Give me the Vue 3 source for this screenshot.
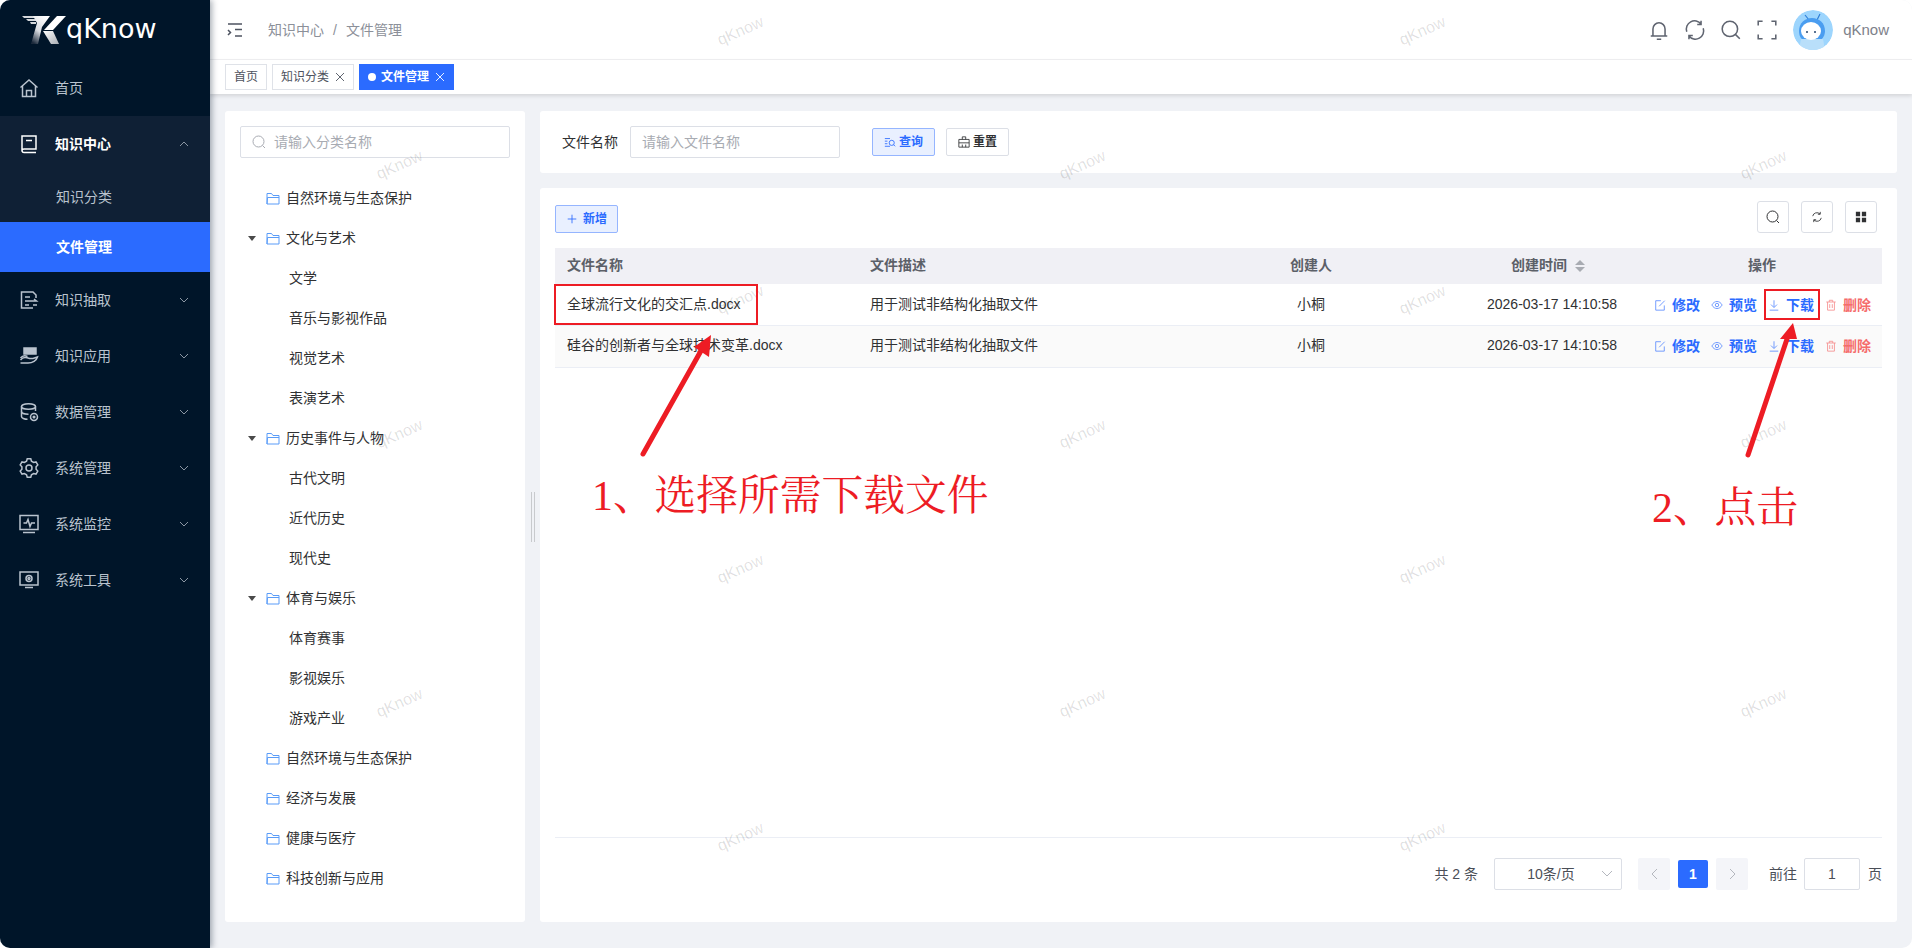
<template>
  <div class="page">
    <aside class="sidebar">
      <div class="logo">
        <svg class="logo-mark" viewBox="0 0 44 28">
          <defs>
            <linearGradient id="wing" x1="0.7" y1="0" x2="0.2" y2="1">
              <stop offset="0" stop-color="#fff" />
              <stop offset="0.55" stop-color="#d8dbe0" />
              <stop offset="1" stop-color="#1c2a3c" />
            </linearGradient>
            <linearGradient id="leg" x1="0" y1="0" x2="1" y2="1">
              <stop offset="0" stop-color="#fff" />
              <stop offset="1" stop-color="#a9adb3" />
            </linearGradient>
          </defs>
          <path d="M0 0h13l1.5 2H2zM4 3h10v2H6zM8 6h6v2H9z" fill="#d5d8dc" />
          <path d="M11 0h17l-8 11-4 17H9l6-21z" fill="url(#wing)" />
          <path d="M35 0h9L31 14h-9z" fill="#fff" />
          <path d="M21 15h10l6 13h-8z" fill="url(#leg)" />
        </svg>
        <span class="logo-text">qKnow</span>
      </div>
      <nav>
        <template v-for="item in menu" :key="item.label">
          <div class="menu-item" :class="{ open: item.children }">
            <svg class="menu-icon" viewBox="0 0 20 20">
              <path v-for="d in icons[item.icon]" :key="d" :d="d" />
              <path v-if="item.icon === 'hand'" class="filled" d="M5 2h12v6H5z" />
            </svg>
            <span>{{ item.label }}</span>
            <svg v-if="item.arrow" class="menu-arrow" viewBox="0 0 10 6">
              <path :d="item.children ? 'M1 5l4-4 4 4' : 'M1 1l4 4 4-4'" />
            </svg>
          </div>
          <div
            v-for="sub in item.children"
            :key="sub.label"
            class="sub-item"
            :class="{ active: sub.active }"
          >
            {{ sub.label }}
          </div>
        </template>
      </nav>
    </aside>

    <div class="main">
      <header class="topbar">
        <svg class="collapse" viewBox="0 0 16 14">
          <path d="M1 1h14M8 6.5h7M8 13h7M1 7l2.5 2.5L1 12" />
        </svg>
        <span class="crumb">知识中心</span>
        <span class="crumb-sep">/</span>
        <span class="crumb">文件管理</span>
        <div class="top-actions">
          <svg viewBox="0 0 20 20"><path d="M2.5 15.5h15M4.5 15.5V9a5.5 5.5 0 0 1 11 0v6.5M8 18.5h4" /></svg>
          <svg viewBox="0 0 20 20"><path d="M2.5 11.5A7.5 7.5 0 0 1 15.500 4.500M17.500 8.500A7.500 7.500 0 0 1 4.500 15.500M15.500 1.500v3.500H12M4.500 18.500V15H8" /></svg>
          <svg viewBox="0 0 20 20"><path d="M9 2a7 7 0 1 0 0 14 7 7 0 0 0 0-14zM14.2 14.2L18 18" /></svg>
          <svg viewBox="0 0 20 20"><path d="M2 6V2h4M14 2h4v4M18 14v4h-4M6 18H2v-4" /></svg>
          <svg class="avatar" viewBox="0 0 40 40">
            <circle cx="20" cy="20" r="20" fill="#9dd5fd" />
            <path d="M12 5l4 5M27 4l-3 6" stroke="#2f7fd8" stroke-width="1.2" fill="none" />
            <path d="M6 21c0-8 6-13 13-13s13 5 13 13c0 6-4 9-6 10H12c-3-1-6-4-6-10z" fill="#4a9df0" />
            <path d="M8 29h22l2 11H6z" fill="#b9dffa" />
            <ellipse cx="18" cy="21" rx="10" ry="9" fill="#fff" />
            <circle cx="14" cy="22" r="1" fill="#23436e" />
            <circle cx="22" cy="22" r="1" fill="#23436e" />
          </svg>
          <span class="user">qKnow</span>
        </div>
      </header>

      <div class="tags">
        <span class="tag">首页</span>
        <span class="tag">知识分类<svg class="tag-x" viewBox="0 0 10 10"><path d="M1 1l8 8M9 1l-8 8" /></svg></span>
        <span class="tag active"><b class="dot"></b>文件管理<svg class="tag-x" viewBox="0 0 10 10"><path d="M1 1l8 8M9 1l-8 8" /></svg></span>
      </div>

      <div class="content">
        <section class="tree-panel">
          <div class="input search-input">
            <svg viewBox="0 0 14 14"><path d="M6.5 1a5.5 5.5 0 1 0 0 11 5.5 5.5 0 0 0 0-11zM10.5 10.5L13 13" /></svg>
            <span>请输入分类名称</span>
          </div>
          <div class="tree">
            <div v-for="node in tree" :key="node.key" class="tree-row" :class="{ leaf: !node.folder }">
              <template v-if="node.folder">
                <i class="caret" :class="{ hidden: !node.open }"></i>
                <svg class="folder" viewBox="0 0 14 13">
                  <path d="M1 12V1.5h4.5L7 3.5h6V12zM1 12l.5-6.5H13" />
                </svg>
              </template>
              <span>{{ node.label }}</span>
            </div>
          </div>
        </section>

        <div class="splitter"><i></i></div>

        <div class="right">
          <section class="query card">
            <label>文件名称</label>
            <div class="input name-input"><span>请输入文件名称</span></div>
            <button class="btn primary first-btn">
              <svg viewBox="0 0 14 14"><path d="M1 3h6M1 6h3M1 9h3M1 12h6M9 5a3 3 0 1 0 0 6 3 3 0 0 0 0-6zM11.2 10.2L13 12" /></svg>
              查询
            </button>
            <button class="btn">
              <svg viewBox="0 0 14 14"><path d="M5 4V1h4v3M1 4h12v9H1zM1 8h12M5 13v-3M9 13v-3" /></svg>
              重置
            </button>
          </section>

          <section class="table-card card">
            <div class="toolbar">
              <button class="btn primary add-btn">
                <svg viewBox="0 0 14 14"><path d="M7 2v10M2 7h10" /></svg>
                新增
              </button>
              <div class="tools">
                <button class="tool">
                  <svg viewBox="0 0 14 14"><path d="M6.5 1a5.5 5.5 0 1 0 0 11 5.5 5.5 0 0 0 0-11zM10.5 10.5L13 13" /></svg>
                </button>
                <button class="tool">
                  <svg class="small" viewBox="0 0 14 14"><path d="M2 6a5 5 0 0 1 8.5-2.500M12 8a5 5 0 0 1-8.500 2.500M10.800 1v2.800H8M3.200 13v-2.800H6" /></svg>
                </button>
                <button class="tool">
                  <svg class="solid" viewBox="0 0 14 14"><path d="M1 1h5v5H1zM8 1h5v5H8zM1 8h5v5H1zM8 8h5v5H8z" /></svg>
                </button>
              </div>
            </div>

            <div class="table-wrap">
              <table>
                <colgroup>
                  <col style="width: 303px" />
                  <col style="width: 363px" />
                  <col style="width: 180px" />
                  <col style="width: 241px" />
                  <col style="width: 240px" />
                </colgroup>
                <thead>
                  <tr>
                    <th>文件名称</th>
                    <th>文件描述</th>
                    <th class="center">创建人</th>
                    <th class="center time head-time">
                      创建时间
                      <span class="sort"><i></i><i></i></span>
                    </th>
                    <th class="center">操作</th>
                  </tr>
                </thead>
                <tbody>
                  <tr v-for="row in rows" :key="row.name">
                    <td>{{ row.name }}</td>
                    <td>{{ row.desc }}</td>
                    <td class="center">{{ row.user }}</td>
                    <td class="center time">{{ row.time }}</td>
                    <td>
                      <div class="ops">
                        <a v-for="op in ops" :key="op.label" class="op" :class="{ danger: op.danger }">
                          <svg viewBox="0 0 14 14">
                            <path v-for="d in op.icon" :key="d" :d="d" />
                          </svg>
                          {{ op.label }}
                        </a>
                      </div>
                    </td>
                  </tr>
                </tbody>
              </table>
            </div>

            <div class="pager">
              <span class="total">共 2 条</span>
              <div class="page-size">
                <span>10条/页</span>
                <svg viewBox="0 0 12 7"><path d="M1 1l5 5 5-5" /></svg>
              </div>
              <button class="nav-btn">
                <svg viewBox="0 0 7 12"><path d="M6 1L1 6l5 5" /></svg>
              </button>
              <span class="num">1</span>
              <button class="nav-btn">
                <svg viewBox="0 0 7 12"><path d="M1 1l5 5-5 5" /></svg>
              </button>
              <span class="jump">前往</span>
              <div class="jump-input">1</div>
              <span>页</span>
            </div>
          </section>
        </div>
      </div>

      <span
        v-for="mark in watermarks"
        :key="mark.x + '-' + mark.y"
        class="watermark"
        :style="{ left: mark.x + 'px', top: mark.y + 'px' }"
      >qKnow</span>
    </div>

    <!-- red notes drawn over the screenshot -->
    <i class="note-box box-one"></i>
    <i class="note-box box-two"></i>
    <svg class="note-arrows" viewBox="0 0 1912 948">
      <path class="shaft" d="M643 454L702 349" />
      <path class="head" d="M711 335L694 347L709 357z" />
      <path class="shaft" d="M1748 455L1788 336" />
      <path class="head" d="M1793 323L1780 339L1797 339z" />
    </svg>
    <span class="note-text text-one">1、选择所需下载文件</span>
    <span class="note-text text-two">2、点击</span>
  </div>
</template>

<script setup>
// six teeth, flat tip on top
function gearPath() {
  const pt = (r, deg) => {
    const a = ((deg - 90) * Math.PI) / 180
    return (10 + r * Math.cos(a)).toFixed(2) + ' ' + (10 + r * Math.sin(a)).toFixed(2)
  }
  let d = ''
  for (let i = 0; i < 6; i++) {
    const c = i * 60
    d += (i ? 'L' : 'M') + pt(9.3, c - 11) + 'L' + pt(9.3, c + 11) + 'L' + pt(7.2, c + 20) + 'L' + pt(7.2, c + 40)
  }
  return d + 'z'
}

const icons = {
  home: ['M1.5 9.5L10 2l8.5 7.5', 'M3.5 8v10.5h13V8', 'M7.5 18.5v-6h5v6'],
  book: ['M3 17V2h14v13H5a2 2 0 0 0-2 2 2 2 0 0 0 2 1.5h12', 'M7 6.5h6'],
  doc: ['M17 8V5l-3-3H2.5v16H14', 'M6 7h5M6 11h11.5l-2.5-2M6 15h4M14 15h4'],
  hand: ['M1.5 14c3-3.5 6-2.5 9.5-1.5h3l4.5-1.5c-1 3.5-5 6-9.5 6H1.5', 'M1.5 12c2-2.5 5-2.5 7-1.5'],
  db: ['M2.5 4.5a7 2.8 0 1 0 14 0 7 2.8 0 1 0-14 0z', 'M2.5 4.5v10c0 1.5 3 2.8 6 2.8', 'M16.5 4.5V9', 'M2.5 9.5c0 1.5 3 2.8 7 2.8', 'M15 11.5a3.5 3.5 0 1 0 0 7 3.5 3.5 0 0 0 0-7z', 'M15 14.2a.8.8 0 1 0 0 1.6.8.8 0 0 0 0-1.6z'],
  gear: [gearPath(), 'M10 7a3 3 0 1 0 0 6 3 3 0 0 0 0-6z'],
  pulse: ['M1 1.5h18v14H1z', 'M4 18.5h12', 'M4.5 9h3l1.5-3.5 2 7 1.5-3.5h3.5'],
  tool: ['M1 2h18v13H1z', 'M6 17.5h8', 'M10 5.5a3 3 0 1 0 0 6 3 3 0 0 0 0-6z', 'M10 7.5a1 1 0 1 0 0 2 1 1 0 0 0 0-2z']
}

const menu = [
  { label: '首页', icon: 'home' },
  {
    label: '知识中心',
    icon: 'book',
    arrow: true,
    children: [{ label: '知识分类' }, { label: '文件管理', active: true }]
  },
  { label: '知识抽取', icon: 'doc', arrow: true },
  { label: '知识应用', icon: 'hand', arrow: true },
  { label: '数据管理', icon: 'db', arrow: true },
  { label: '系统管理', icon: 'gear', arrow: true },
  { label: '系统监控', icon: 'pulse', arrow: true },
  { label: '系统工具', icon: 'tool', arrow: true }
]

const folderNode = (label, open) => ({ key: label + open, label, folder: true, open })
const leafNode = (label) => ({ key: label, label })

const tree = [
  folderNode('自然环境与生态保护', false),
  folderNode('文化与艺术', true),
  leafNode('文学'),
  leafNode('音乐与影视作品'),
  leafNode('视觉艺术'),
  leafNode('表演艺术'),
  folderNode('历史事件与人物', true),
  leafNode('古代文明'),
  leafNode('近代历史'),
  leafNode('现代史'),
  folderNode('体育与娱乐', true),
  leafNode('体育赛事'),
  leafNode('影视娱乐'),
  leafNode('游戏产业'),
  { key: 'nature-2', label: '自然环境与生态保护', folder: true, open: false },
  folderNode('经济与发展', false),
  folderNode('健康与医疗', false),
  folderNode('科技创新与应用', false)
]

const rows = [
  { name: '全球流行文化的交汇点.docx', desc: '用于测试非结构化抽取文件', user: '小桐', time: '2026-03-17 14:10:58' },
  { name: '硅谷的创新者与全球技术变革.docx', desc: '用于测试非结构化抽取文件', user: '小桐', time: '2026-03-17 14:10:58' }
]

const ops = [
  { label: '修改', icon: ['M12 7.5V13H2V2h6', 'M6 8.5L12.5 2'] },
  { label: '预览', icon: ['M1 7c3-5.5 9-5.5 12 0-3 5.5-9 5.5-12 0z', 'M7 5a2 2 0 1 0 0 4 2 2 0 0 0 0-4z'] },
  { label: '下载', icon: ['M7 1.5v8', 'M3.5 6.5L7 10l3.5-3.5', 'M2 13h10'] },
  { label: '删除', danger: true, icon: ['M1.5 3.5h11', 'M5 3.5V1.5h4v2', 'M3 3.5V13h8V3.5', 'M5.5 6v4.5M8.5 6v4.5'] }
]

// watermark sits on a staggered grid, rows 134.5px apart and columns 341px apart
const watermarks = []
for (let r = 0; r < 7; r++) {
  const cols = r % 2 === 0 ? [741, 1423] : [400, 1083, 1764]
  cols.forEach((cx) => {
    watermarks.push({ x: cx - 210 - 25, y: 31 + r * 134.4 - 10 })
  })
}
</script>

<style>
html,
body {
  margin: 0;
  background: #fff;
}
</style>

<style scoped>
.page {
  position: relative;
  display: flex;
  height: 100vh;
  overflow: hidden;
  border-radius: 10px;
  font-family: "Liberation Sans", "Noto Sans CJK SC", sans-serif;
  font-size: 14px;
  line-height: 20px;
  color: #303133;
  background: #f0f2f6;
}

.sidebar {
  position: relative;
  z-index: 3;
  width: 210px;
  flex: none;
  background: #001529;
  box-shadow: 2px 0 6px rgba(0, 21, 41, 0.35);
}

.logo {
  display: flex;
  align-items: center;
  height: 60px;
  padding-left: 22px;
}

.logo-mark {
  width: 44px;
  height: 28px;
}

.logo-text {
  font-family: "DejaVu Sans", sans-serif;
  font-size: 27px;
  color: #fff;
  line-height: 1;
  margin-top: -4px;
}

.menu-item {
  display: flex;
  align-items: center;
  height: 56px;
  padding-left: 19px;
  color: #b9c3ce;
}

.menu-item.open {
  color: #fff;
  font-weight: 600;
  background: #0f2035;
}

.menu-icon {
  width: 20px;
  height: 20px;
  margin-right: 16px;
  fill: none;
  stroke: currentColor;
  stroke-width: 1.5;
}

.menu-icon .filled {
  fill: currentColor;
}

.menu-arrow {
  width: 10px;
  height: 6px;
  margin-left: auto;
  margin-right: 21px;
  fill: none;
  stroke: #8b96a3;
  stroke-width: 1;
}

.sub-item {
  height: 50px;
  line-height: 50px;
  padding-left: 56px;
  color: #b9c3ce;
  background: #0f2035;
}

.sub-item.active {
  color: #fff;
  font-weight: 600;
  background: #2b6bff;
}

.main {
  position: relative;
  flex: 1;
  min-width: 0;
  display: flex;
  flex-direction: column;
}

.topbar {
  display: flex;
  align-items: center;
  flex: none;
  height: 60px;
  padding-left: 17px;
  background: #fff;
  border-bottom: 1px solid #f0f0f2;
  box-sizing: border-box;
}

.collapse {
  width: 16px;
  height: 14px;
  margin-right: 25px;
  fill: none;
  stroke: #4d5360;
  stroke-width: 1.5;
}

.crumb {
  color: #8c9099;
}

.crumb-sep {
  margin: 0 9px;
  color: #8c9099;
}

.top-actions {
  display: flex;
  align-items: center;
  margin-left: auto;
  padding-right: 23px;
}

.top-actions svg {
  width: 22px;
  height: 22px;
  margin-right: 14px;
  fill: none;
  stroke: #5f6470;
  stroke-width: 1.4;
}

.top-actions .avatar {
  width: 40px;
  height: 40px;
  margin-left: 1px;
  margin-right: 10px;
  border-radius: 50%;
  stroke: none;
}

.user {
  font-size: 15px;
  color: #7d818a;
}

.tags {
  display: flex;
  align-items: center;
  flex: none;
  gap: 5px;
  height: 34px;
  padding-left: 15px;
  background: #fff;
  box-shadow: 0 2px 4px rgba(0, 0, 0, 0.12);
  position: relative;
}

.tag {
  display: flex;
  align-items: center;
  height: 26px;
  padding: 0 8px;
  box-sizing: border-box;
  border: 1px solid #dfe2e8;
  font-size: 12px;
  color: #4e5360;
  background: #fff;
}

.tag.active {
  border-color: #2b6bff;
  background: #2b6bff;
  color: #fff;
  font-weight: 600;
}

.tag-x {
  width: 10px;
  height: 10px;
  margin-left: 6px;
  fill: none;
  stroke: currentColor;
  stroke-width: 0.9;
}

.dot {
  width: 8px;
  height: 8px;
  border-radius: 50%;
  background: #fff;
  margin-right: 5px;
}

.content {
  flex: 1;
  min-height: 0;
  display: flex;
  padding: 17px 15px 26px;
}

.card,
.tree-panel {
  background: #fff;
  border-radius: 3px;
}

.tree-panel {
  width: 300px;
  flex: none;
  box-sizing: border-box;
  padding: 15px;
}

.input {
  display: flex;
  align-items: center;
  height: 32px;
  box-sizing: border-box;
  border: 1px solid #dcdfe6;
  border-radius: 2px;
  padding: 0 11px;
  color: #a8abb2;
}

.search-input svg {
  width: 14px;
  height: 14px;
  margin-right: 8px;
  fill: none;
  stroke: #a8abb2;
  stroke-width: 1;
}

.tree {
  margin-top: 20px;
}

.tree-row {
  display: flex;
  align-items: center;
  height: 40px;
  padding-left: 8px;
}

.tree-row.leaf {
  padding-left: 49px;
}

.caret {
  width: 0;
  height: 0;
  border-left: 4.5px solid transparent;
  border-right: 4.5px solid transparent;
  border-top: 5px solid #4a4a4a;
  margin-right: 10px;
}

.caret.hidden {
  visibility: hidden;
}

.folder {
  width: 14px;
  height: 13px;
  margin-right: 6px;
  fill: none;
  stroke: #5a9cf8;
  stroke-width: 1;
}

.splitter {
  width: 15px;
  flex: none;
  display: flex;
  align-items: center;
  justify-content: center;
}

.splitter i {
  display: block;
  width: 2px;
  height: 50px;
  border-left: 1px solid #c8cacd;
  border-right: 1px solid #c8cacd;
}

.right {
  flex: 1;
  min-width: 0;
  display: flex;
  flex-direction: column;
  gap: 15px;
}

.query {
  display: flex;
  align-items: center;
  flex: none;
  height: 62px;
  padding: 0 22px;
  box-sizing: border-box;
}

.query label {
  margin-right: 12px;
}

.name-input {
  width: 210px;
}

.btn {
  display: inline-flex;
  align-items: center;
  justify-content: center;
  height: 28px;
  padding: 0 11px;
  border: 1px solid #dcdfe6;
  border-radius: 2px;
  background: #fff;
  font: inherit;
  font-size: 12px;
  font-weight: 600;
  color: #303133;
}

.btn svg {
  width: 12px;
  height: 12px;
  margin-right: 3px;
  fill: none;
  stroke: currentColor;
  stroke-width: 1;
}

.btn.primary {
  border-color: #95b5ff;
  background: #e9f0ff;
  color: #2b6bff;
}

.first-btn {
  margin-left: 32px;
  margin-right: 11px;
}

.table-card {
  flex: 1;
  min-height: 0;
  display: flex;
  flex-direction: column;
  padding: 13px 15px 0;
}

.toolbar {
  display: flex;
  align-items: flex-end;
  justify-content: space-between;
  flex: none;
  margin-bottom: 15px;
}

.add-btn {
  width: 63px;
  padding: 0;
}

.add-btn svg {
  margin-right: 5px;
}

.tools {
  display: flex;
  gap: 12px;
  padding-right: 5px;
}

.tool {
  display: flex;
  align-items: center;
  justify-content: center;
  width: 32px;
  height: 32px;
  padding: 0;
  border: 1px solid #dcdfe6;
  border-radius: 3px;
  background: #fff;
}

.tool svg {
  width: 14px;
  height: 14px;
  fill: none;
  stroke: #303133;
  stroke-width: 1;
}

.tool svg.small {
  width: 12px;
  height: 12px;
}

.tool svg.solid {
  width: 12px;
  height: 12px;
  fill: #303133;
  stroke: none;
}

.table-wrap {
  flex: 1;
  min-height: 0;
  border-bottom: 1px solid #ebeef5;
}

table {
  width: 100%;
  table-layout: fixed;
  border-collapse: collapse;
}

th {
  height: 36px;
  padding: 0 12px 2px;
  box-sizing: border-box;
  background: #f0f0f5;
  text-align: left;
  font-weight: 600;
  color: #5c6068;
}

td {
  height: 41.5px;
  padding: 0 12px 2px;
  box-sizing: border-box;
  border-bottom: 1px solid #ebeef5;
  color: #303133;
}

tbody tr:nth-child(2) {
  background: #fafafa;
}

th.center,
td.center {
  text-align: center;
}

th.time,
td.time {
  padding-left: 61px;
  padding-right: 0;
}

th.head-time {
  padding-right: 8px;
}

.sort {
  display: inline-flex;
  flex-direction: column;
  gap: 2px;
  margin-left: 4px;
  vertical-align: middle;
}

.sort i {
  width: 0;
  height: 0;
  border-left: 5px solid transparent;
  border-right: 5px solid transparent;
  border-bottom: 5px solid #a8abb2;
}

.sort i:last-child {
  border-bottom: 0;
  border-top: 5px solid #a8abb2;
}

.ops {
  display: flex;
  justify-content: flex-end;
  gap: 11px;
  margin-right: -1px;
  padding-top: 2px;
}

.op {
  display: inline-flex;
  align-items: center;
  font-weight: 600;
  color: #2b6bff;
  white-space: nowrap;
}

.op.danger {
  color: #f56c6c;
}

.op svg {
  width: 12px;
  height: 12px;
  margin-right: 6px;
  fill: none;
  stroke: currentColor;
  stroke-width: 1;
  opacity: 0.75;
}

.pager {
  display: flex;
  align-items: center;
  justify-content: flex-end;
  flex: none;
  height: 84px;
  box-sizing: border-box;
  padding-bottom: 12px;
  color: #4a4e57;
}

.total {
  margin-right: 16px;
}

.page-size {
  position: relative;
  display: flex;
  align-items: center;
  justify-content: center;
  width: 128px;
  height: 32px;
  box-sizing: border-box;
  border: 1px solid #dcdfe6;
  border-radius: 2px;
  margin-right: 16px;
  padding-right: 14px;
}

.page-size svg {
  position: absolute;
  right: 8px;
  top: 11px;
  width: 12px;
  height: 7px;
  fill: none;
  stroke: #b4b7be;
  stroke-width: 1;
}

.nav-btn {
  display: flex;
  align-items: center;
  justify-content: center;
  width: 32px;
  height: 32px;
  padding: 0;
  border: 0;
  border-radius: 2px;
  background: #f4f5f9;
}

.nav-btn svg {
  width: 7px;
  height: 12px;
  fill: none;
  stroke: #b4b7be;
  stroke-width: 1;
}

.num {
  width: 30px;
  height: 28px;
  margin: 0 8px;
  border-radius: 2px;
  background: #2b6bff;
  color: #fff;
  font-weight: 700;
  text-align: center;
  line-height: 28px;
}

.jump {
  margin-left: 21px;
  margin-right: 7px;
}

.jump-input {
  width: 56px;
  height: 32px;
  box-sizing: border-box;
  border: 1px solid #dcdfe6;
  border-radius: 2px;
  text-align: center;
  line-height: 30px;
  margin-right: 8px;
}

.watermark {
  position: absolute;
  z-index: 2;
  font-size: 16px;
  color: rgba(0, 0, 0, 0.13);
  transform: rotate(-24deg);
  pointer-events: none;
  white-space: nowrap;
}

.note-box {
  position: absolute;
  z-index: 4;
  box-sizing: border-box;
  border: 2px solid #ed1c24;
}

.box-one {
  left: 554px;
  top: 284px;
  width: 204px;
  height: 41px;
}

.box-two {
  left: 1764px;
  top: 289px;
  width: 56px;
  height: 31px;
}

.note-arrows {
  position: absolute;
  z-index: 4;
  left: 0;
  top: 0;
  width: 1912px;
  height: 948px;
  pointer-events: none;
}

.shaft {
  fill: none;
  stroke: #ed1c24;
  stroke-width: 5;
  stroke-linecap: round;
}

.head {
  fill: #ed1c24;
}

.note-text {
  position: absolute;
  z-index: 4;
  font-family: "Liberation Serif", "Noto Serif CJK SC", "Noto Sans CJK SC", serif;
  font-size: 41.75px;
  line-height: 48px;
  color: #ed1c24;
  white-space: nowrap;
}

.text-one {
  left: 592px;
  top: 472px;
}

.text-two {
  left: 1652px;
  top: 484px;
}
</style>
